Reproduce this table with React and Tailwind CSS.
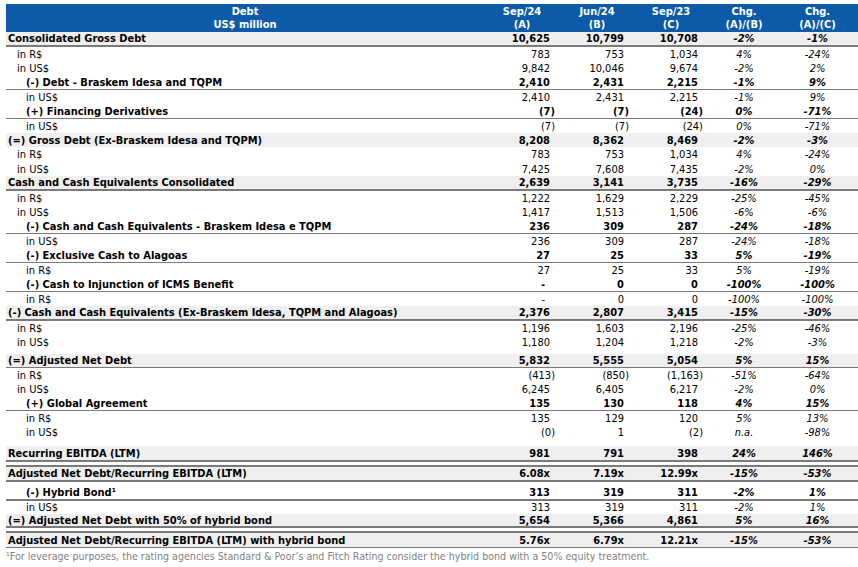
const FONT = { fontFamily: '"DejaVu Sans Condensed", "DejaVu Sans", sans-serif' };

// g = gray band, bd = bottom rule (thick | thin), top = thick rule on top
const ROWS = [
  { l: "Consolidated Gross Debt", i: 0, b: 1, g: 1, bd: "thick", h: "h-[15px]", v: ["10,625", "10,799", "10,708", "-2%", "-1%"] },
  { l: "in R$", i: 1, h: "h-[14px]", v: ["783", "753", "1,034", "4%", "-24%"] },
  { l: "in US$", i: 1, h: "h-[14px]", v: ["9,842", "10,046", "9,674", "-2%", "2%"] },
  { l: "(-) Debt - Braskem Idesa and TQPM", i: 2, b: 1, bd: "thin", h: "h-[15px]", v: ["2,410", "2,431", "2,215", "-1%", "9%"] },
  { l: "in US$", i: 2, h: "h-[14px]", v: ["2,410", "2,431", "2,215", "-1%", "9%"] },
  { l: "(+) Financing Derivatives", i: 2, b: 1, bd: "thin", h: "h-[15px]", v: ["(7)", "(7)", "(24)", "0%", "-71%"] },
  { l: "in US$", i: 2, h: "h-[14px]", v: ["(7)", "(7)", "(24)", "0%", "-71%"] },
  { l: "(=) Gross Debt (Ex-Braskem Idesa and TQPM)", i: 0, b: 1, g: 1, h: "h-[14px]", v: ["8,208", "8,362", "8,469", "-2%", "-3%"] },
  { l: "in R$", i: 1, h: "h-[15px]", v: ["783", "753", "1,034", "4%", "-24%"] },
  { l: "in US$", i: 1, h: "h-[14px]", v: ["7,425", "7,608", "7,435", "-2%", "0%"] },
  { l: "Cash and Cash Equivalents Consolidated", i: 0, b: 1, g: 1, bd: "thick", h: "h-[15px]", v: ["2,639", "3,141", "3,735", "-16%", "-29%"] },
  { l: "in R$", i: 1, h: "h-[14px]", v: ["1,222", "1,629", "2,229", "-25%", "-45%"] },
  { l: "in US$", i: 1, h: "h-[14px]", v: ["1,417", "1,513", "1,506", "-6%", "-6%"] },
  { l: "(-) Cash and Cash Equivalents - Braskem Idesa e TQPM", i: 2, b: 1, bd: "thin", h: "h-[15px]", v: ["236", "309", "287", "-24%", "-18%"] },
  { l: "in US$", i: 2, h: "h-[14px]", v: ["236", "309", "287", "-24%", "-18%"] },
  { l: "(-) Exclusive Cash to Alagoas", i: 2, b: 1, bd: "thin", h: "h-[15px]", v: ["27", "25", "33", "5%", "-19%"] },
  { l: "in R$", i: 2, h: "h-[14px]", v: ["27", "25", "33", "5%", "-19%"] },
  { l: "(-) Cash to Injunction of ICMS Benefit", i: 2, b: 1, bd: "thin", h: "h-[15px]", v: ["-", "0", "0", "-100%", "-100%"] },
  { l: "in R$", i: 2, h: "h-[14px]", v: ["-", "0", "0", "-100%", "-100%"] },
  { l: "(-) Cash and Cash Equivalents (Ex-Braskem Idesa, TQPM and Alagoas)", i: 0, b: 1, g: 1, bd: "thick", h: "h-[15px]", v: ["2,376", "2,807", "3,415", "-15%", "-30%"] },
  { l: "in R$", i: 1, h: "h-[14px]", v: ["1,196", "1,603", "2,196", "-25%", "-46%"] },
  { l: "in US$", i: 1, h: "h-[14px]", v: ["1,180", "1,204", "1,218", "-2%", "-3%"] },
  { spacer: "h-[5px]" },
  { l: "(=) Adjusted Net Debt", i: 0, b: 1, g: 1, bd: "thin", h: "h-[14px]", v: ["5,832", "5,555", "5,054", "5%", "15%"] },
  { l: "in R$", i: 1, h: "h-[14px]", v: ["(413)", "(850)", "(1,163)", "-51%", "-64%"] },
  { l: "in US$", i: 1, h: "h-[14px]", v: ["6,245", "6,405", "6,217", "-2%", "0%"] },
  { l: "(+) Global Agreement", i: 2, b: 1, bd: "thin", h: "h-[15px]", v: ["135", "130", "118", "4%", "15%"] },
  { l: "in R$", i: 2, h: "h-[14px]", v: ["135", "129", "120", "5%", "13%"] },
  { l: "in US$", i: 2, h: "h-[14px]", v: ["(0)", "1", "(2)", "n.a.", "-98%"] },
  { spacer: "h-[7px]" },
  { l: "Recurring EBITDA (LTM)", i: 0, b: 1, g: 1, bd: "thick", h: "h-[16px]", v: ["981", "791", "398", "24%", "146%"] },
  { spacer: "h-[3px]" },
  { l: "Adjusted Net Debt/Recurring EBITDA (LTM)", i: 0, b: 1, g: 1, bd: "thick", top: 1, h: "h-[17px]", v: ["6.08x", "7.19x", "12.99x", "-15%", "-53%"] },
  { l: "(-) Hybrid Bond¹", i: 2, b: 1, bd: "thick", h: "h-[19px]", pt: "pt-[4px]", v: ["313", "319", "311", "-2%", "1%"] },
  { l: "in US$", i: 2, h: "h-[13px]", v: ["313", "319", "311", "-2%", "1%"] },
  { l: "(=) Adjusted Net Debt with 50% of hybrid bond", i: 0, b: 1, g: 1, bd: "thick", h: "h-[14px]", v: ["5,654", "5,366", "4,861", "5%", "16%"] },
  { spacer: "h-[3px]" },
  { l: "Adjusted Net Debt/Recurring EBITDA (LTM) with hybrid bond", i: 0, b: 1, g: 1, bd: "thin", top: 1, h: "h-[17px]", v: ["5.76x", "6.79x", "12.21x", "-15%", "-53%"] },
];

const GRID = "grid grid-cols-[478px_76px_74px_74px_72px_75px]";

function numPad(s) {
  if (s.startsWith("(")) return "pr-[5px]";
  if (s === "-") return "pr-[15px]";
  return "pr-[10px]";
}

function Row({ r }) {
  if (r.spacer) return <div className={r.spacer} />;
  const indent = r.i === 0 ? "pl-[2px]" : r.i === 1 ? "pl-[11px]" : "pl-[20px]";
  const border =
    r.bd === "thick" ? "border-b-2 border-[#7a7a7a]" : r.bd === "thin" ? "border-b border-[#7a7a7a]" : "";
  const top = r.top ? "border-t-2 border-t-[#7a7a7a]" : "";
  return (
    <div className={`${GRID} ${r.h} ${border} ${top} ${r.g ? "bg-[#efefef]" : ""} ${r.b ? "font-bold" : ""} ${r.pt || ""}`}>
      <div className={`flex items-center ${indent} whitespace-nowrap`}>{r.l}</div>
      {r.v.slice(0, 3).map((x, k) => (
        <div key={k} className={`flex items-center justify-end ${numPad(x)}`}>
          {x}
        </div>
      ))}
      {r.v.slice(3).map((x, k) => (
        <div key={k} className="flex items-center justify-center italic">
          {x}
        </div>
      ))}
    </div>
  );
}

export default function App() {
  return (
    <div className="w-[858px] h-[567px] bg-white overflow-hidden text-black" style={FONT}>
      <div className="pt-[4px] pl-[6px] text-[11px] leading-none">
        <div className={`${GRID} h-[28px] bg-[#0d5ba8] text-white font-bold leading-[13px]`}>
          <div className="flex flex-col items-center justify-center">
            <span>Debt</span>
            <span>US$ million</span>
          </div>
          {[
            ["Sep/24", "(A)"],
            ["Jun/24", "(B)"],
            ["Sep/23", "(C)"],
            ["Chg.", "(A)/(B)"],
            ["Chg.", "(A)/(C)"],
          ].map(([a, b], k) => (
            <div key={k} className="flex flex-col items-center justify-center">
              <span>{a}</span>
              <span>{b}</span>
            </div>
          ))}
        </div>
        {ROWS.map((r, k) => (
          <Row key={k} r={r} />
        ))}
        <div className="h-[17px] flex items-center text-[10.6px] text-[#7f7f7f] whitespace-nowrap">
          ¹For leverage purposes, the rating agencies Standard &amp; Poor’s and Fitch Rating consider the hybrid bond with a 50% equity treatment.
        </div>
      </div>
    </div>
  );
}
